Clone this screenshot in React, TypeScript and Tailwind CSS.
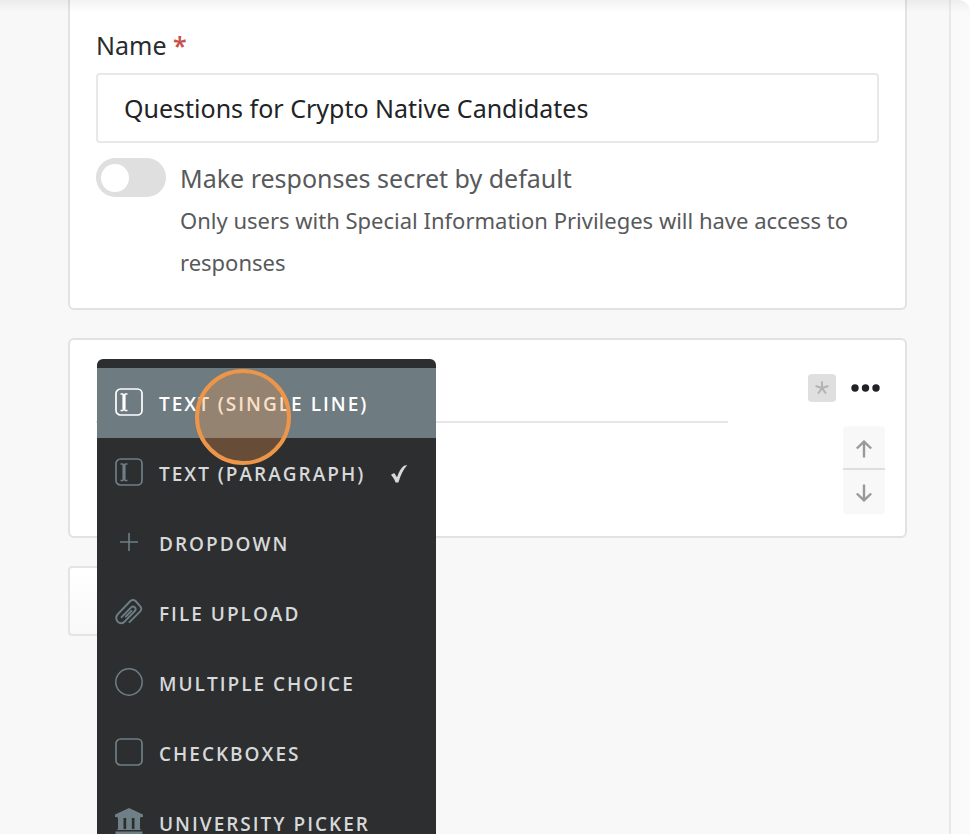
import React, { useState } from "react";

type IconProps = { className?: string };

function TextIcon({ className }: IconProps) {
    return (
        <svg className={className} width="28" height="28" viewBox="0 0 28 28" fill="none" stroke="currentColor">
            <rect x="1" y="1" width="26" height="26" rx="4.500" strokeWidth="1.7" />
            <path d="M5.500 6h2.200L9 7.200 10.300 6h2.200M5.500 22.500h2.200L9 21.300l1.300 1.200h2.200" strokeWidth="1.4" />
            <path d="M9 7v14.500" strokeWidth="3.200" />
        </svg>
    );
}

function PlusIcon({ className }: IconProps) {
    return (
        <svg className={className} width="28" height="28" viewBox="0 0 28 28" fill="none" stroke="currentColor">
            <path d="M14 5v18M5 14h18" strokeWidth="1.6" />
        </svg>
    );
}

function ClipIcon({ className }: IconProps) {
    return (
        <svg
            className={className}
            width="28"
            height="28"
            viewBox="0 0 28 28"
            fill="none"
            stroke="currentColor"
            strokeWidth="1.9"
            strokeLinecap="round"
            strokeLinejoin="round"
        >
            <path d="M14.500 24.200 25.200 13.400Q27.300 11 25.500 8.600L20.600 3Q18 1 15.400 3L2.800 16.200Q-.2 20 2.600 23.600Q6 27 9.400 23.800L19.700 13.200Q21.600 10.800 19.800 9.200Q18 7.800 15.900 9.600L6.600 19.200" />
            <path d="M10.800 18.600 16.400 12.900" />
        </svg>
    );
}

function CircleIcon({ className }: IconProps) {
    return (
        <svg className={className} width="28" height="28" viewBox="0 0 28 28" fill="none" stroke="currentColor">
            <circle cx="14" cy="14" r="13.200" strokeWidth="1.5" />
        </svg>
    );
}

function SquareIcon({ className }: IconProps) {
    return (
        <svg className={className} width="28" height="28" viewBox="0 0 28 28" fill="none" stroke="currentColor">
            <rect x="1" y="1" width="26" height="26" rx="4.500" strokeWidth="1.7" />
        </svg>
    );
}

function UniversityIcon({ className }: IconProps) {
    return (
        <svg className={className} width="28" height="28" viewBox="0 0 28 28" fill="currentColor">
            <path d="M14 0 28 6.500V9h-2l-1 1H3L2 9H0V6.500zM3 10h5.500v11h2.700V10h5.600v11h2.700V10H25v11l1.500 1h-25L3 21zM.5 23.500h27V27H.5z" />
        </svg>
    );
}

function CheckIcon({ className }: IconProps) {
    return (
        <svg className={className} width="18" height="20" viewBox="0 0 18 20" fill="currentColor">
            <path d="M1 10.800 4.200 9 7 13.200Q10 4.500 14 1.800L17.300 1Q11.500 7.500 8.400 18.600H5.600Q4.200 14.500 1 10.800z" />
        </svg>
    );
}

const fieldTypes = [
    { label: "Text (Single Line)", Icon: TextIcon },
    { label: "Text (Paragraph)", Icon: TextIcon },
    { label: "Dropdown", Icon: PlusIcon },
    { label: "File Upload", Icon: ClipIcon },
    { label: "Multiple Choice", Icon: CircleIcon },
    { label: "Checkboxes", Icon: SquareIcon },
    { label: "University Picker", Icon: UniversityIcon },
];

function FieldTypeMenu() {
    const [active, setActive] = useState(0);
    const selected = 1;

    return (
        <div
            role="menu"
            className="absolute top-[19px] left-[27px] z-10 w-[339px] rounded-t-md bg-[#2d2e30] pt-[9px] pb-2"
        >
            {fieldTypes.map(({ label, Icon }, i) => (
                <button
                    key={label}
                    type="button"
                    role="menuitem"
                    onMouseEnter={() => setActive(i)}
                    className={`flex h-[70px] w-full items-center pr-7 pb-0.5 pl-[18px] text-left ${
                        i === active ? "bg-[#6e7b81] text-white" : "text-[#d6d8d9]"
                    }`}
                >
                    <Icon className={i === active ? "shrink-0" : "shrink-0 text-[#6e7f86]"} />
                    <span className="flex-1 pt-1 pl-4 font-['Open_Sans','Noto_Sans',sans-serif] text-[19px] leading-none font-semibold tracking-[2px] whitespace-nowrap uppercase">
                        {label}
                    </span>
                    {i === selected && <CheckIcon className="mt-1" />}
                </button>
            ))}
            {/* click marker */}
            <span className="pointer-events-none absolute top-[10px] left-[98px] size-24 rounded-full border-4 border-[#ed9549] bg-[#ed9549]/30" />
        </div>
    );
}

function QuestionCard() {
    return (
        <section className="relative mt-7 flex justify-between rounded-md border-2 border-[#e2e2e2] bg-white pr-5 pb-[22px] pl-[26px]">
            <input
                type="text"
                aria-label="Question"
                className="mr-20 h-[83px] min-w-0 flex-1 border-b-2 border-[#e6e6e6] bg-transparent text-2xl outline-none"
            />
            <div className="flex flex-col items-end pt-[34px]">
                <div className="flex items-center gap-[15px] pr-1">
                    <button
                        type="button"
                        aria-label="Required"
                        className="flex size-7 items-center justify-center rounded bg-[#dfdfdf] text-[#b3b3b3]"
                    >
                        <svg width="14" height="14" viewBox="0 0 14 14" stroke="currentColor" strokeWidth="2" strokeLinecap="round">
                            <path d="M7 7V1.200M7 7 1.300 5.200M7 7l5.700-1.800M7 7l-3.500 5M7 7l3.500 5" />
                        </svg>
                    </button>
                    <button type="button" aria-label="More options" className="text-[#222226]">
                        <svg width="30" height="8" viewBox="0 0 30 8" fill="currentColor">
                            <circle cx="4" cy="4" r="3.700" />
                            <circle cx="14.500" cy="4" r="3.700" />
                            <circle cx="25" cy="4" r="3.700" />
                        </svg>
                    </button>
                </div>
                <div className="mt-6 flex w-[42px] flex-col overflow-hidden rounded bg-[#f8f8f8] text-[#999]">
                    <button
                        type="button"
                        aria-label="Move up"
                        className="flex h-11 items-center justify-center border-b-2 border-[#dedede] pt-1"
                    >
                        <svg width="18" height="18" viewBox="0 0 18 18" fill="none" stroke="currentColor" strokeWidth="2.400">
                            <path d="M9 17.500V2M1.800 8.500 9 1.600l7.200 6.900" />
                        </svg>
                    </button>
                    <button type="button" aria-label="Move down" className="flex h-11 items-center justify-center pt-0.5">
                        <svg width="18" height="18" viewBox="0 0 18 18" fill="none" stroke="currentColor" strokeWidth="2.400">
                            <path d="M9 .5V16M1.800 9.500 9 16.400l7.200-6.900" />
                        </svg>
                    </button>
                </div>
            </div>
            <FieldTypeMenu />
        </section>
    );
}

export default function App() {
    const [name, setName] = useState("Questions for Crypto Native Candidates");
    const [secret, setSecret] = useState(false);

    return (
        <div className="h-screen overflow-hidden bg-white font-['Noto_Sans','Open_Sans',sans-serif]">
            <div className="relative flex h-full overflow-hidden rounded-tr-xl bg-[#f8f8f8]">
                <main className="min-w-0 flex-1 pr-[42px] pl-[68px]">
                    <section className="rounded-b-md border-2 border-t-0 border-[#e2e2e2] bg-white px-[26px] pt-[27px] pb-[25px]">
                        <label htmlFor="name" className="block text-[25px] leading-9 text-[#2a2b2e]">
                            Name <span className="font-semibold text-[#c94f4a]">*</span>
                        </label>
                        <input
                            id="name"
                            type="text"
                            value={name}
                            onChange={(e) => setName(e.target.value)}
                            className="mt-[10px] h-[70px] w-full rounded border-2 border-[#e8e8e8] bg-white px-[26px] text-[25px] text-[#222326] outline-none"
                        />
                        <div className="mt-[15px] flex gap-[14px] text-[#58595b]">
                            <input
                                id="secret"
                                type="checkbox"
                                role="switch"
                                checked={secret}
                                onChange={(e) => setSecret(e.target.checked)}
                                className="flex h-[39px] w-[70px] shrink-0 appearance-none items-center rounded-full bg-[#dfdfdf] px-[5px] before:size-7 before:rounded-full before:bg-white checked:justify-end checked:bg-[#6e7b81]"
                            />
                            <div>
                                <label htmlFor="secret" className="block text-[25px] leading-[41px]">
                                    Make responses secret by default
                                </label>
                                <p className="text-[22px] leading-[42px]">
                                    Only users with Special Information Privileges will have access to responses
                                </p>
                            </div>
                        </div>
                    </section>

                    <QuestionCard />

                    <button
                        type="button"
                        aria-label="Add question"
                        className="mt-7 block h-[70px] w-60 rounded border-2 border-[#e4e4e4] bg-linear-to-b from-white to-[#f8f8f8]"
                    />
                </main>
                <aside className="w-[21px] border-l-2 border-[#e9e9e9] bg-[#fafafa]" />
                <div className="pointer-events-none absolute inset-x-0 top-0 h-3 bg-linear-to-b from-black/5 to-transparent" />
            </div>
        </div>
    );
}
